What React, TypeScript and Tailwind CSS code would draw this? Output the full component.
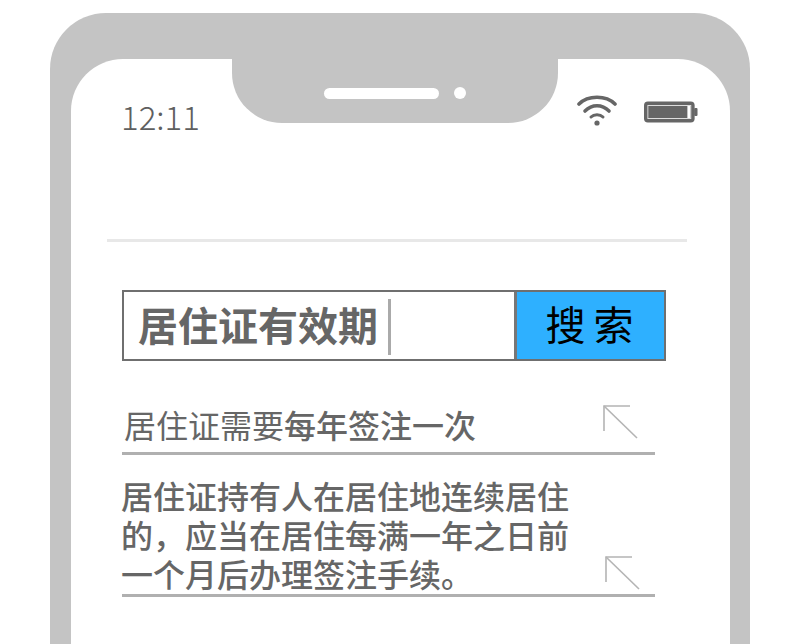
const cjk = "font-['Noto_Sans_CJK_SC',sans-serif]";

function Wifi() {
  return (
    <svg width="40" height="32" viewBox="1 0 40 32" fill="none" stroke="#666" strokeWidth="3.6" strokeLinecap="round">
      <path d="M3 10 C12 1 30 1 39 10" />
      <path d="M9 17 C16 10 26 10 33 17" />
      <path d="M15 23 C18 20 24 20 27 23" strokeWidth="3" />
      <circle cx="21" cy="29" r="2.6" fill="#666" stroke="none" />
    </svg>
  );
}

function Battery() {
  return (
    <svg width="54" height="22" viewBox="0 0 56 22" preserveAspectRatio="none">
      <rect x="0" y="0.5" width="52.5" height="21" rx="4" fill="#666" />
      <rect x="52" y="7" width="3.5" height="8" rx="1" fill="#666" />
      <rect x="4" y="4.5" width="44.5" height="13" fill="none" stroke="#ddd" strokeWidth="1" />
      <rect x="45" y="5" width="3" height="12" fill="#fff" />
    </svg>
  );
}

function CornerArrow() {
  return (
    <svg width="36" height="34" viewBox="0 0 36 34" fill="none" stroke="#b4b4b4" strokeWidth="1.6">
      <path d="M1 26 V1 H27" />
      <path d="M1 1 L34 33" />
    </svg>
  );
}

export default function App() {
  return (
    <div className={`h-[644px] w-[800px] overflow-hidden bg-white px-[50px] pt-[13px] ${cjk}`}>
      <div className="h-[700px] rounded-t-[56px] bg-[#c4c4c4] pl-[21px] pr-[20px] pt-[46px]">
        <div className="h-full rounded-t-[52px] bg-white">
          {/* status bar + notch */}
          <div className="flex h-[64px] items-start">
            <div className="w-[161px] pl-[50px] pt-[34px] text-[33px] leading-[46px] font-light text-[#5f5f5f]">12:11</div>
            <div className="flex h-[64px] w-[326px] items-center justify-center gap-[15px] rounded-b-[50px] bg-[#c4c4c4] pt-[4px]">
              <div className="h-[11px] w-[115px] rounded-full bg-white"></div>
              <div className="h-[12px] w-[12px] rounded-full bg-white"></div>
            </div>
            <div className="flex flex-1 items-start pl-[19px] pt-[35px]">
              <Wifi />
              <div className="ml-[27px] mt-[7px]">
                <Battery />
              </div>
            </div>
          </div>

          <div className="ml-[36px] mr-[43px] mt-[116px] h-[3px] bg-[#e8e8e8]"></div>

          {/* search box */}
          <div className="ml-[51px] mt-[48px] flex h-[71px] w-[544px] border-2 border-[#6f6f6f]">
            <div className="flex w-[390px] items-center pb-[4px] pl-[14px]">
              <span className="text-[40px] leading-none font-bold text-[#666]">居住证有效期</span>
              <span className="ml-[10px] mt-[6px] h-[56px] w-[3px] bg-[#aaa]"></span>
            </div>
            <div className="flex flex-1 items-center justify-center border-l-[3px] border-[#777] bg-[#2eb0ff] pb-[5px] pl-[6px] text-[40px] leading-none tracking-[8px] text-black">
              搜索
            </div>
          </div>

          {/* result rows */}
          <div className="ml-[51px] w-[533px]">
            <div className="relative flex h-[94px] items-end border-b-[3px] border-[#b0b0b0] pb-[5px] pl-[2px] text-[32px] leading-[46px] text-[#666]">
              <span>居住证需要</span>
              <span className="font-medium">每年签注一次</span>
              <div className="absolute right-[16px] top-[44px]">
                <CornerArrow />
              </div>
            </div>
            <div className="relative h-[142px] border-b-[3px] border-[#b0b0b0] pt-[21px] text-[32px] leading-[39px] font-medium text-[#666]">
              <p className="-ml-px w-[450px]">居住证持有人在居住地连续居住的，应当在居住每满一年之日前一个月后办理签注手续。</p>
              <div className="absolute right-[14px] top-[101px]">
                <CornerArrow />
              </div>
            </div>
          </div>
        </div>
      </div>
    </div>
  );
}
